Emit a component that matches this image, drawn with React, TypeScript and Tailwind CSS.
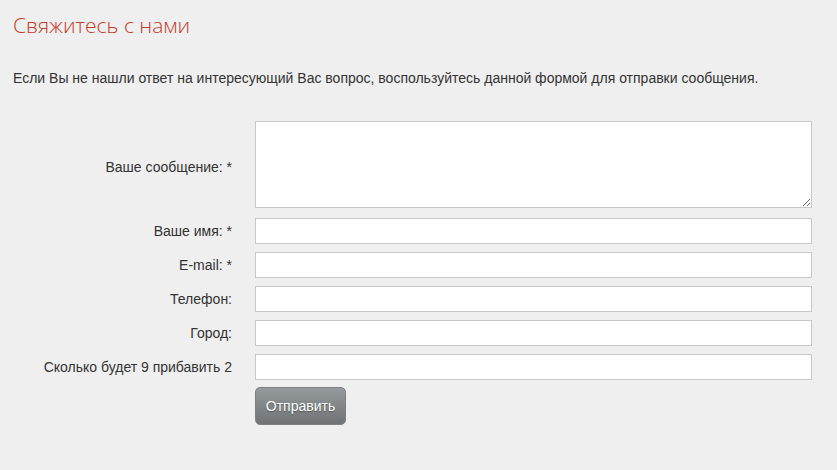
export default function App() {
  const rows = [
    { label: "Ваше имя: *" },
    { label: "E-mail: *" },
    { label: "Телефон:" },
    { label: "Город:" },
    { label: "Сколько будет 9 прибавить 2" },
  ]

  return (
    <div className="min-h-[470px] w-full bg-[#efefef] px-[13px] pt-[10px] text-[#333] font-['Liberation_Sans',Arial,sans-serif]">
      <h1 className="text-[21px] leading-[30px] font-light text-[#c23b2b] font-['Open_Sans',sans-serif]">
        Свяжитесь с нами
      </h1>

      <p className="mt-[30px] text-[14px] leading-[16px]">
        Если Вы не нашли ответ на интересующий Вас вопрос, воспользуйтесь данной формой для отправки сообщения.
      </p>

      <form className="mt-[35px] grid grid-cols-[219px_557px] gap-x-[23px] text-[14px]" onSubmit={e => e.preventDefault()}>
        <label className="flex items-center justify-end pt-[6px]">Ваше сообщение: *</label>
        <textarea className="h-[87px] border border-[#c8c8c8] bg-white outline-none" />

        {rows.map((r, i) => (
          <div key={r.label} className="contents">
            <label className={`flex items-center justify-end ${i === 0 ? "mt-[10px]" : "mt-[8px]"}`}>{r.label}</label>
            <input className={`h-[26px] border border-[#c8c8c8] bg-white outline-none ${i === 0 ? "mt-[10px]" : "mt-[8px]"}`} />
          </div>
        ))}

        <div />
        <div className="mt-[7px]">
          <button
            type="submit"
            className="h-[38px] w-[91px] rounded-[5px] border border-[#7d8184] bg-gradient-to-b from-[#959a9c] to-[#6f7375] text-[14px] text-white [text-shadow:0_1px_1px_rgba(0,0,0,0.35)]"
          >
            Отправить
          </button>
        </div>
      </form>
    </div>
  )
}
